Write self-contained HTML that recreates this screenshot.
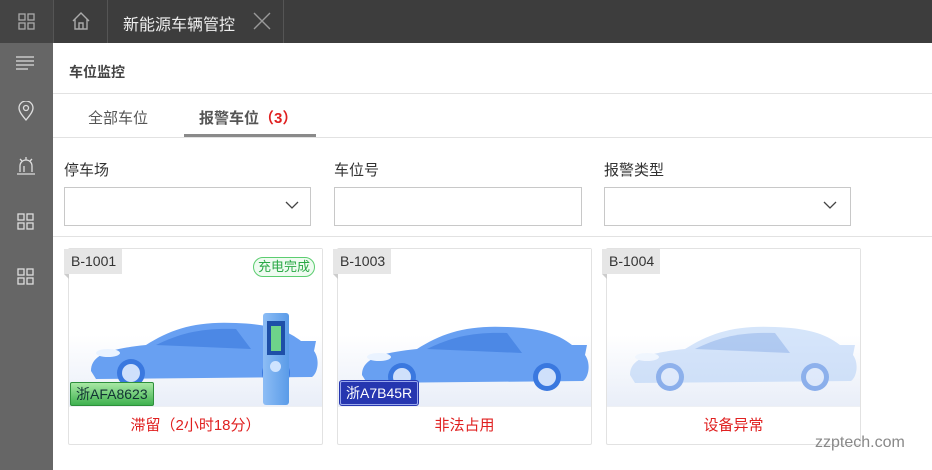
<!DOCTYPE html><html><head><meta charset="utf-8"><style>
*{margin:0;padding:0;box-sizing:border-box}
body{width:932px;height:470px;overflow:hidden;background:#fff;font-family:"Liberation Sans","Noto Sans CJK SC",sans-serif;position:relative;color:#333}
.a{position:absolute}
.top{left:0;top:0;width:932px;height:43px;background:#3d3d3d}
.side{left:0;top:43px;width:53px;height:427px;background:#666}
.lbl{font-size:15px;color:#333}
.inp{height:39px;border:1px solid #c8c8c8;background:#fff}
.card{width:255px;height:197px;border:1px solid #e2e2e2;border-radius:2px;background:#fff}
.img{left:0;top:0;width:253px;height:158px;background:linear-gradient(#fff 55%,#e9eef8);border-bottom:1px solid #eef0f4}
.tag{width:58px;height:25px;background:#e6e6e6;font-size:14px;color:#333;line-height:25px;padding-left:7px}
.tag:after{content:"";position:absolute;left:0;top:25px;border-top:5px solid #ccc;border-left:5px solid transparent}
.st{left:0;top:158px;width:253px;height:38px;text-align:center;line-height:38px;color:#e02020;font-size:15px}
.plate{height:24px;font-size:14px;line-height:22px;padding:0 5px;border-radius:2px}
</style></head><body>
<div class="a top"></div>
<div class="a" style="left:0;top:0;width:53px;height:43px;background:#444"></div>
<svg class="a" style="left:18px;top:13px" width="17" height="17" fill="none" stroke="#aaa" stroke-width="1.3"><rect x="1" y="1" width="6" height="6"/><rect x="10" y="1" width="6" height="6"/><rect x="1" y="10" width="6" height="6"/><rect x="10" y="10" width="6" height="6"/></svg>
<div class="a" style="left:53px;top:0;width:1px;height:43px;background:#555"></div>
<div class="a" style="left:107px;top:0;width:1px;height:43px;background:#555"></div>
<div class="a" style="left:283px;top:0;width:1px;height:43px;background:#555"></div>
<svg class="a" style="left:71px;top:11px" width="20" height="20" fill="none" stroke="#aaa" stroke-width="1.4"><path d="M2 10 L10 2 L18 10 M4 8 V18 H16 V8 M8 18 V12 H12 V18"/></svg>
<div class="a" style="left:123px;top:11px;font-size:16px;color:#eee">新能源车辆管控</div>
<svg class="a" style="left:253px;top:12px" width="18" height="18" stroke="#999" stroke-width="1.4"><path d="M1 1 L17 17 M17 1 L1 17"/></svg>
<div class="a side"></div>
<svg class="a" style="left:16px;top:55px" width="20" height="16" stroke="#ddd" stroke-width="1.3"><path d="M0 2H18M0 6H18M0 10H18M0 14H12"/></svg>
<svg class="a" style="left:18px;top:101px" width="16" height="20" fill="none" stroke="#ddd" stroke-width="1.3"><path d="M8 19 C3 13 1 10 1 7 A7 7 0 0 1 15 7 C15 10 13 13 8 19Z"/><circle cx="8" cy="7" r="2.5"/></svg>
<svg class="a" style="left:16px;top:156px" width="20" height="20" fill="none" stroke="#ddd" stroke-width="1.3"><path d="M4 16 V10 A6 6 0 0 1 16 10 V16 M1 18H19 M8 16 V10 M10 1V4 M4 3L6 5 M16 3L14 5"/></svg>
<svg class="a" style="left:17px;top:213px" width="17" height="17" fill="none" stroke="#ddd" stroke-width="1.3"><rect x="1" y="1" width="6" height="6"/><rect x="10" y="1" width="6" height="6"/><rect x="1" y="10" width="6" height="6"/><rect x="10" y="10" width="6" height="6"/></svg>
<svg class="a" style="left:17px;top:268px" width="17" height="17" fill="none" stroke="#ddd" stroke-width="1.3"><rect x="1" y="1" width="6" height="6"/><rect x="10" y="1" width="6" height="6"/><rect x="1" y="10" width="6" height="6"/><rect x="10" y="10" width="6" height="6"/></svg>

<div class="a" style="left:69px;top:62px;font-size:14px;font-weight:bold;color:#444">车位监控</div>
<div class="a" style="left:53px;top:93px;width:879px;height:1px;background:#e2e2e2"></div>
<div class="a" style="left:88px;top:107px;font-size:15px;color:#555">全部车位</div>
<div class="a" style="left:199px;top:107px;font-size:15px;color:#555;font-weight:bold">报警车位<span style="color:#e02020">（3）</span></div>
<div class="a" style="left:53px;top:137px;width:879px;height:1px;background:#e2e2e2"></div>
<div class="a" style="left:184px;top:134px;width:132px;height:3px;background:#8a8a8a"></div>

<div class="a lbl" style="left:64px;top:159px">停车场</div>
<div class="a lbl" style="left:334px;top:159px">车位号</div>
<div class="a lbl" style="left:604px;top:159px">报警类型</div>
<div class="a inp" style="left:64px;top:187px;width:247px"></div>
<div class="a inp" style="left:334px;top:187px;width:248px"></div>
<div class="a inp" style="left:604px;top:187px;width:247px"></div>
<svg class="a" style="left:285px;top:200px" width="14" height="10" fill="none" stroke="#444" stroke-width="1.3"><path d="M1 2 L7 8 L13 2"/></svg>
<svg class="a" style="left:823px;top:200px" width="14" height="10" fill="none" stroke="#444" stroke-width="1.3"><path d="M1 2 L7 8 L13 2"/></svg>
<div class="a" style="left:53px;top:236px;width:879px;height:1px;background:#e2e2e2"></div>

<svg width="0" height="0" style="position:absolute"><defs>
<g id="car">
<path d="M5 60 C5 45 20 38 60 34 C85 18 110 10 150 12 C180 13 200 18 215 30 L230 30 L228 40 C234 48 232 62 226 66 L10 68 Z"/>
<path d="M70 34 C95 22 115 17 150 18 L165 38 Z" fill="#2f6fd8" opacity=".5"/>
<circle cx="45" cy="62" r="14" fill="#3a78df"/><circle cx="45" cy="62" r="9" fill="#cfe0fb"/>
<circle cx="190" cy="62" r="14" fill="#3a78df"/><circle cx="190" cy="62" r="9" fill="#cfe0fb"/>
<ellipse cx="22" cy="42" rx="12" ry="4" fill="#eaf3ff"/>
</g></defs></svg>

<div class="a card" style="left:68px;top:248px"><div class="a img"></div>
<svg class="a" style="left:17px;top:62px" width="240" height="90"><use href="#car" fill="#68a0f2"/></svg>
<div class="a" style="left:194px;top:64px;width:26px;height:92px;background:linear-gradient(90deg,#8dbdf5,#5a9be8);border-radius:3px"></div>
<div class="a" style="left:198px;top:72px;width:18px;height:34px;background:#1e4fa8"></div>
<div class="a" style="left:202px;top:77px;width:10px;height:25px;background:#6ed38a"></div>
<div class="a" style="left:201px;top:112px;width:11px;height:11px;border-radius:50%;background:#cfe4ff"></div>
<div class="a" style="left:184px;top:8px;font-size:13px;color:#2aa845;border:1.5px solid #5ccd70;border-radius:11px;padding:0 4px;line-height:18px;background:#effbf1">充电完成</div>
<div class="a plate" style="left:1px;top:133px;background:linear-gradient(#a9e8a5,#3fb14f);color:#133;border:1px solid #2d8f3b">浙AFA8623</div>
<div class="a st">滞留（2小时18分）</div></div>
<div class="a tag" style="left:64px;top:249px">B-1001</div>

<div class="a card" style="left:337px;top:248px"><div class="a img"></div>
<svg class="a" style="left:19px;top:66px" width="240" height="90"><use href="#car" fill="#68a0f2"/></svg>
<div class="a plate" style="left:2px;top:132px;background:#2636b0;color:#fff;border:1px solid #9aa8ee;outline:1px solid #2636b0">浙A7B45R</div>
<div class="a st">非法占用</div></div>
<div class="a tag" style="left:333px;top:249px">B-1003</div>

<div class="a card" style="left:606px;top:248px"><div class="a img"></div>
<svg class="a" style="left:18px;top:66px" width="240" height="90" opacity=".55"><use href="#car" fill="#b4d0f7"/></svg>
<div class="a st">设备异常</div></div>
<div class="a tag" style="left:602px;top:249px">B-1004</div>

<div class="a" style="left:815px;top:434px;font-size:16px;color:#888">zzptech.com</div>
</body></html>
